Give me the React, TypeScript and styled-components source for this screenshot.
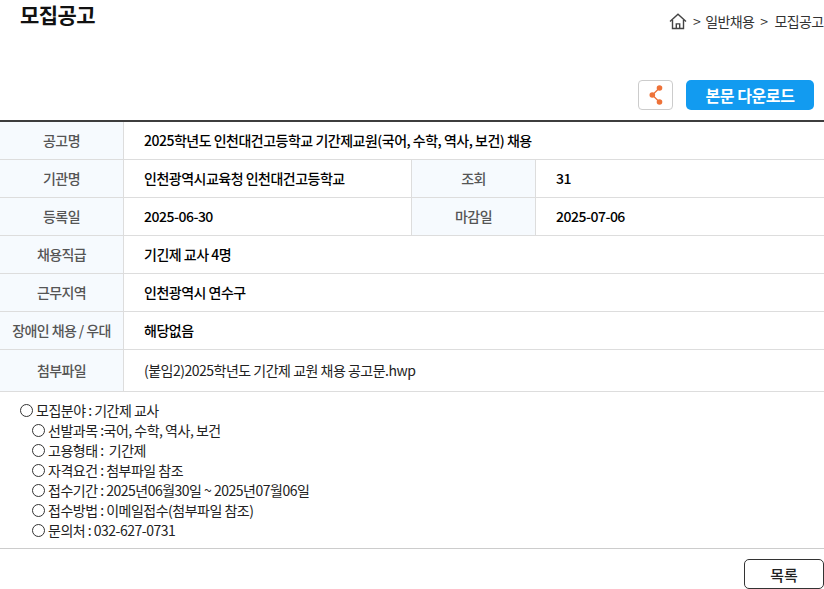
import React from 'react'
import styled, { createGlobalStyle } from 'styled-components'

const GlobalStyle = createGlobalStyle`
  html, body {
    margin: 0;
    padding: 0;
    background: #fff;
    overflow: hidden;
  }
  body {
    font-family: 'Noto Sans CJK KR', 'Noto Sans', sans-serif;
    color: #000;
  }
`

const Page = styled.div`
  width: 824px;
  height: 589px;
  overflow: hidden;
`

const Header = styled.div`
  display: flex;
  justify-content: space-between;
  align-items: flex-start;
  height: 80px;
`

const Title = styled.h2`
  margin: 0 0 0 20px;
  font-size: 21px;
  font-weight: 700;
  line-height: 28px;
  letter-spacing: -0.6px;
  color: #111;
`

const Breadcrumb = styled.div`
  display: flex;
  align-items: center;
  margin-top: 11px;
  height: 20px;
  width: 155px;
  font-size: 14px;
  color: #333;
  white-space: nowrap;
  letter-spacing: -0.6px;
`

const Crumb = styled.span<{ $gap: number }>`
  margin-left: ${(p) => p.$gap}px;
`

const Actions = styled.div`
  display: flex;
  justify-content: flex-end;
  align-items: center;
  gap: 13px;
  height: 30px;
  padding-right: 10px;
  margin-bottom: 10px;
`

const ShareButton = styled.button`
  display: flex;
  align-items: center;
  justify-content: center;
  width: 35px;
  height: 30px;
  padding: 0;
  background: #fff;
  border: 1px solid #ccc;
  border-radius: 4px;
`

const DownloadButton = styled.button`
  width: 128px;
  height: 30px;
  padding: 0;
  background: #129bf0;
  border: 0;
  border-radius: 5px;
  color: #fff;
  font-family: inherit;
  font-size: 16px;
  font-weight: 700;
  letter-spacing: -0.45px;
`

const InfoTable = styled.div`
  border-top: 2px solid #3d3d3d;
`

const Row = styled.div<{ $tall?: boolean; $half?: boolean }>`
  display: grid;
  grid-template-columns: ${(p) =>
    p.$half ? '124px 287px 125px 1fr' : '124px 1fr'};
  height: ${(p) => (p.$tall ? 42 : 38)}px;
  box-sizing: border-box;
  border-bottom: 1px solid #ddd;
`

const Label = styled.div`
  display: flex;
  align-items: center;
  justify-content: center;
  padding-bottom: 2px;
  background: #f6fafe;
  border-right: 1px solid #ddd;
  font-size: 14px;
  font-weight: 500;
  color: #555;
  letter-spacing: -0.6px;
  white-space: nowrap;
`

const SideLabel = styled(Label)`
  border-left: 1px solid #ddd;
`

const Value = styled.div<{ $plain?: boolean }>`
  display: flex;
  align-items: center;
  padding-left: 20px;
  padding-bottom: 2px;
  font-size: 14px;
  font-weight: ${(p) => (p.$plain ? 400 : 500)};
  color: ${(p) => (p.$plain ? '#222' : '#000')};
  letter-spacing: -0.5px;
  white-space: nowrap;
`

const Notice = styled.div`
  padding: 8px 0 7px 20px;
  border-bottom: 1px solid #ccc;
  height: 157px;
  box-sizing: border-box;
`

const NoticeLine = styled.div<{ $indent?: boolean }>`
  display: flex;
  align-items: center;
  height: 20px;
  margin-left: ${(p) => (p.$indent ? 12 : 0)}px;
  font-size: 14px;
  color: #222;
  letter-spacing: -0.5px;
  white-space: pre;
`

const Ring = styled.span`
  width: 11px;
  height: 11px;
  margin-right: 3px;
  border: 1px solid #333;
  border-radius: 50%;
  flex: none;
`

const Footer = styled.div`
  display: flex;
  justify-content: flex-end;
  padding-top: 10px;
`

const ListButton = styled.button`
  width: 80px;
  height: 30px;
  padding: 0;
  background: #fff;
  border: 1px solid #333;
  border-radius: 5px;
  font-family: inherit;
  font-size: 15px;
  font-weight: 500;
  color: #222;
`

const HomeIcon = () => (
  <svg width="18" height="17" viewBox="0 0 18 17" fill="none" stroke="#444" strokeWidth="1.4">
    <path d="M1 8.5 9 1.2l8 7.3" />
    <path d="M3.5 7v8.5h11V7" />
    <path d="M7.3 15.5v-4.600h3.400v4.600" />
  </svg>
)

const ShareIcon = () => (
  <svg width="14" height="20" viewBox="0 0 14 20">
    <path d="M10.500 3 3.300 10l7.200 7" fill="none" stroke="#ee7238" strokeWidth="1.300" />
    <circle cx="10.500" cy="3" r="2.800" fill="#ee7238" />
    <circle cx="3.300" cy="10" r="2.800" fill="#ee7238" />
    <circle cx="10.500" cy="17" r="2.800" fill="#ee7238" />
  </svg>
)

const NOTICE: [string, boolean][] = [
  ['모집분야 : 기간제 교사', false],
  ['선발과목 :국어, 수학, 역사, 보건', true],
  ['고용형태 :  기간제', true],
  ['자격요건 : 첨부파일 참조', true],
  ['접수기간 : 2025년06월30일 ~ 2025년07월06일', true],
  ['접수방법 : 이메일접수(첨부파일 참조)', true],
  ['문의처 : 032-627-0731', true],
]

export default function App() {
  return (
    <Page>
      <GlobalStyle />
      <Header>
        <Title>모집공고</Title>
        <Breadcrumb>
          <HomeIcon />
          <Crumb $gap={6}>&gt;</Crumb>
          <Crumb $gap={5}>일반채용</Crumb>
          <Crumb $gap={6}>&gt;</Crumb>
          <Crumb $gap={7}>모집공고</Crumb>
        </Breadcrumb>
      </Header>
      <Actions>
        <ShareButton type="button" aria-label="공유">
          <ShareIcon />
        </ShareButton>
        <DownloadButton type="button">본문 다운로드</DownloadButton>
      </Actions>
      <InfoTable>
        <Row>
          <Label>공고명</Label>
          <Value>2025학년도 인천대건고등학교 기간제교원(국어, 수학, 역사, 보건) 채용</Value>
        </Row>
        <Row $half>
          <Label>기관명</Label>
          <Value>인천광역시교육청 인천대건고등학교</Value>
          <SideLabel>조회</SideLabel>
          <Value>31</Value>
        </Row>
        <Row $half>
          <Label>등록일</Label>
          <Value>2025-06-30</Value>
          <SideLabel>마감일</SideLabel>
          <Value>2025-07-06</Value>
        </Row>
        <Row>
          <Label>채용직급</Label>
          <Value>기긴제 교사 4명</Value>
        </Row>
        <Row>
          <Label>근무지역</Label>
          <Value>인천광역시 연수구</Value>
        </Row>
        <Row>
          <Label>장애인 채용 / 우대</Label>
          <Value>해당없음</Value>
        </Row>
        <Row $tall>
          <Label>첨부파일</Label>
          <Value $plain>(붙임2)2025학년도 기간제 교원 채용 공고문.hwp</Value>
        </Row>
      </InfoTable>
      <Notice>
        {NOTICE.map(([text, indent]) => (
          <NoticeLine key={text} $indent={indent}>
            <Ring />
            {text}
          </NoticeLine>
        ))}
      </Notice>
      <Footer>
        <ListButton type="button">목록</ListButton>
      </Footer>
    </Page>
  )
}
